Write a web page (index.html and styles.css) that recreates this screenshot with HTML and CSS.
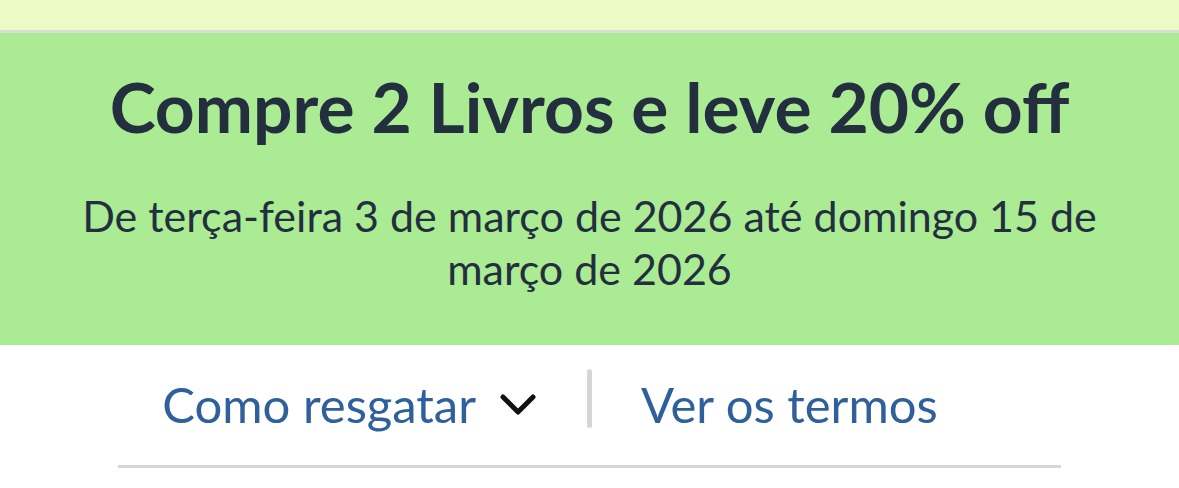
FILE: index.html
```html
<!DOCTYPE html>
<html lang="pt-BR">
<head>
<meta charset="utf-8">
<title>Compre 2 Livros e leve 20% off</title>
<link rel="stylesheet" href="styles.css">
</head>
<body>
<div class="top-strip"></div>
<section class="promo">
  <h1 class="promo-title">Compre 2 Livros e leve 20% off</h1>
  <p class="promo-dates">De terça-feira 3 de março de 2026 até domingo 15 de março de 2026</p>
</section>
<div class="actions">
  <a class="action action-left" href="#">Como resgatar
    <svg class="chevron" width="36" height="22" viewBox="0 0 36 22"><polyline points="3,3 18,18 33,3" fill="none" stroke="#111" stroke-width="5" stroke-linecap="round" stroke-linejoin="round"/></svg>
  </a>
  <span class="divider"></span>
  <a class="action action-right" href="#">Ver os termos</a>
</div>
<div class="rule"></div>
</body>
</html>
```
FILE: styles.css
```css
html, body {
  margin: 0;
  padding: 0;
  background: #ffffff;
}
body {
  font-family: Lato, "Open Sans", sans-serif;
  width: 1179px;
  overflow: hidden;
}
.top-strip {
  height: 30px;
  background: #ebfbc5;
  border-bottom: 3px solid #dadcd6;
}
.promo {
  background: #aaeb94;
  color: #232f3e;
  text-align: center;
  padding: 33px 40px 0;
  height: 279px;
}
.promo-title {
  margin: 0;
  font-size: 69.5px;
  font-weight: 700;
  line-height: 80px;
}
.promo-dates {
  margin: 43px 0 0;
  font-size: 43px;
  line-height: 53px;
}
.actions {
  display: grid;
  grid-template-columns: 1fr auto 1fr;
  align-items: start;
  margin: 24px 118px 0;
}
.action {
  color: #2f609b;
  text-decoration: none;
  font-size: 49px;
  line-height: 59px;
  padding-top: 6px;
  display: flex;
  align-items: center;
}
.action-left {
  justify-self: end;
  padding-right: 51px;
  gap: 24px;
}
.action-right {
  justify-self: start;
  padding-left: 49px;
}
.chevron {
  display: block;
}
.divider {
  width: 5px;
  height: 59px;
  border-radius: 3px;
  background: #d6d6d6;
}
.rule {
  margin: 31px 118px 0;
  height: 3px;
  background: #d6d6d6;
}
```
